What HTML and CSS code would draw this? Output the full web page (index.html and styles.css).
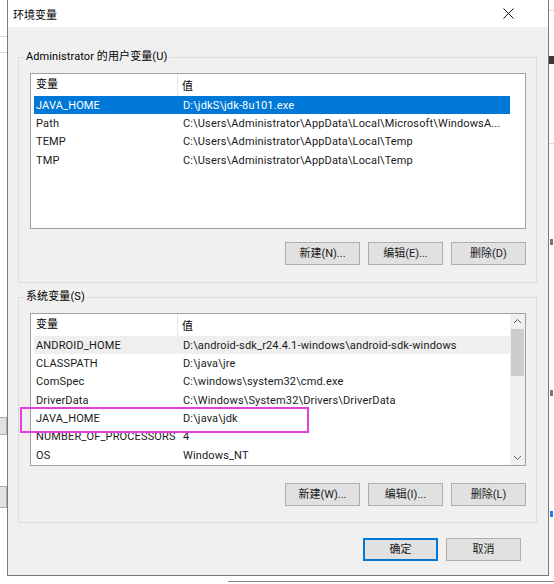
FILE: index.html
```html
<!DOCTYPE html>
<html lang="zh-CN">
<head>
<meta charset="utf-8">
<title>环境变量</title>
<link rel="stylesheet" href="styles.css">
</head>
<body>
<div class="screen">
  <div class="behind behind-left">
    <div class="frag-line fl1"></div>
    <div class="frag-line fl2"></div>
    <div class="frag-btn fb1"></div>
    <div class="frag-btn fb2"></div>
  </div>
  <div class="behind behind-right">
    <div class="frag-dark"></div>
    <div class="frag-line fr1"></div>
    <div class="frag-line fr2"></div>
    <div class="frag-tick ft1"></div>
    <div class="frag-tick ft2"></div>
    <div class="frag-tick ft3"></div>
  </div>
  <div class="behind behind-bottom"></div>

  <div class="dialog">
    <div class="titlebar">
      <span class="title">环境变量</span>
      <svg class="close" width="11" height="11" viewBox="0 0 11 11"><path d="M0.5 0.5 L10.5 10.5 M10.5 0.5 L0.5 10.5" stroke="#111" stroke-width="1" fill="none"/></svg>
    </div>
    <div class="client">
      <div class="group g1">
        <span class="legend">Administrator 的用户变量(U)</span>
        <div class="list l1">
          <div class="lhead">
            <span class="hc1">变量</span><span class="hc2">值</span>
          </div>
          <div class="rows">
            <div class="row sel"><span class="c1">JAVA_HOME</span><span class="c2">D:\jdkS\jdk-8u101.exe</span></div>
            <div class="row"><span class="c1">Path</span><span class="c2">C:\Users\Administrator\AppData\Local\Microsoft\WindowsA...</span></div>
            <div class="row"><span class="c1">TEMP</span><span class="c2">C:\Users\Administrator\AppData\Local\Temp</span></div>
            <div class="row"><span class="c1">TMP</span><span class="c2">C:\Users\Administrator\AppData\Local\Temp</span></div>
          </div>
        </div>
        <div class="btns">
          <button class="btn">新建(N)...</button>
          <button class="btn">编辑(E)...</button>
          <button class="btn">删除(D)</button>
        </div>
      </div>

      <div class="group g2">
        <span class="legend">系统变量(S)</span>
        <div class="list l2">
          <div class="lmain">
            <div class="lhead">
              <span class="hc1">变量</span><span class="hc2">值</span>
            </div>
            <div class="rows">
              <div class="row hover"><span class="c1">ANDROID_HOME</span><span class="c2">D:\android-sdk_r24.4.1-windows\android-sdk-windows</span></div>
              <div class="row"><span class="c1">CLASSPATH</span><span class="c2">D:\java\jre</span></div>
              <div class="row"><span class="c1">ComSpec</span><span class="c2">C:\windows\system32\cmd.exe</span></div>
              <div class="row"><span class="c1">DriverData</span><span class="c2">C:\Windows\System32\Drivers\DriverData</span></div>
              <div class="row"><span class="c1">JAVA_HOME</span><span class="c2">D:\java\jdk</span></div>
              <div class="row"><span class="c1">NUMBER_OF_PROCESSORS</span><span class="c2">4</span></div>
              <div class="row"><span class="c1">OS</span><span class="c2">Windows_NT</span></div>
            </div>
          </div>
          <div class="vscroll">
            <svg class="arrow" width="15" height="15" viewBox="0 0 15 15"><path d="M4 9 L7.5 5.5 L11 9" stroke="#606060" stroke-width="1" fill="none"/></svg>
            <div class="track"><div class="thumb"></div></div>
            <svg class="arrow" width="15" height="15" viewBox="0 0 15 15"><path d="M4 6 L7.5 9.5 L11 6" stroke="#606060" stroke-width="1" fill="none"/></svg>
          </div>
          <div class="mark"></div>
        </div>
        <div class="btns">
          <button class="btn">新建(W)...</button>
          <button class="btn">编辑(I)...</button>
          <button class="btn">删除(L)</button>
        </div>
      </div>

      <div class="footer">
        <button class="btn ok">确定</button>
        <button class="btn">取消</button>
      </div>
    </div>
  </div>
</div>
</body>
</html>
```

FILE: styles.css
```css
* { box-sizing: border-box; }

body {
  margin: 0;
  background: #ffffff;
  font-family: "Microsoft YaHei UI", Roboto, "Noto Sans CJK SC", sans-serif;
  font-size: 11px;
  color: #000;
}

.screen {
  position: relative;
  width: 554px;
  height: 584px;
  overflow: hidden;
  padding-left: 7px;
}

/* fragments of windows behind the dialog */
.behind { position: absolute; overflow: hidden; }
.behind-left { left: 0; top: 0; width: 7px; height: 584px; }
.behind-right { left: 549px; top: 0; width: 5px; height: 584px; }
.behind-bottom { left: 228px; top: 581px; width: 326px; height: 3px; border-top: 1px solid #8a8a8a; }
.frag-line { position: absolute; left: 0; width: 7px; height: 1px; background: #d9d9d9; }
.fl1 { top: 36px; }
.fl2 { top: 52px; }
.fr1 { top: 10px; }
.fr2 { top: 143px; }
.frag-btn {
  position: absolute;
  left: -4px;
  width: 11px;
  background: #e1e1e1;
  border: 1px solid #adadad;
}
.fb1 { top: 417px; height: 18px; }
.fb2 { top: 486px; height: 22px; }
.frag-dark { position: absolute; left: 0; top: 56px; width: 5px; height: 8px; background: #3a3a3a; }
.frag-tick { position: absolute; left: 1px; width: 3px; height: 6px; background: #777; }
.ft1 { top: 239px; }
.ft2 { top: 390px; }
.ft3 { top: 511px; background: #2a7bd4; }

/* dialog */
.dialog {
  width: 542px;
  height: 576px;
  border: 1px solid #7a7a7a;
  border-top: 0;
  background: #f0f0f0;
  display: flex;
  flex-direction: column;
}

.titlebar {
  height: 27px;
  background: #fff;
  display: flex;
  align-items: center;
  justify-content: space-between;
  padding: 0 34px 0 5px;
  flex: none;
}
.title { font-size: 11px; color: #000; }
.close { display: block; }

.client {
  flex: 1;
  padding: 30px 11px 0 10px;
  display: flex;
  flex-direction: column;
}

.group {
  position: relative;
  border: 1px solid #dcdcdc;
  padding: 15px 10px 0 11px;
}
.g1 { height: 226px; }
.g2 { height: 226px; margin-top: 14px; }

.legend {
  position: absolute;
  top: -9px;
  left: 5px;
  padding: 0 2px;
  background: #f0f0f0;
  line-height: 16px;
  letter-spacing: 0.1px;
  color: #000;
}

.list {
  position: relative;
  background: #fff;
  border: 1px solid #a0a0a0;
  display: flex;
}
.l1 { height: 156px; flex-direction: column; }
.l2 { height: 153px; }
.lmain { flex: 1; display: flex; flex-direction: column; }

.lhead {
  height: 22px;
  display: flex;
  align-items: center;
  flex: none;
}
.hc1 {
  width: 147px;
  padding-left: 5px;
  border-right: 1px solid #e5e5e5;
  line-height: 22px;
  height: 22px;
}
.hc2 { padding-left: 4px; }

.rows { display: flex; flex-direction: column; }
.row {
  width: 476px;
  margin-left: 3px;
  height: 18.33px;
  display: flex;
  align-items: center;
  white-space: nowrap;
  letter-spacing: 0.15px;
  color: #1a1a1a;
}
.c1 { width: 146px; padding-left: 2px; flex: none; }
.c2 { padding-left: 3px; }
.row.sel { background: #0078d7; color: #fff; }
.row.hover { background: #efefef; }

.vscroll {
  width: 15px;
  background: #f0f0f0;
  display: flex;
  flex-direction: column;
  flex: none;
}
.arrow { display: block; flex: none; }
.track { flex: 1; }
.thumb { margin: 0 1px; height: 47px; background: #cdcdcd; }

.mark {
  position: absolute;
  left: -11px;
  top: 93px;
  width: 289px;
  height: 26px;
  border: 2px solid #e23ee0;
}

.btns {
  display: flex;
  justify-content: flex-end;
  gap: 8px;
}
.g1 .btns { margin-top: 13px; }
.g2 .btns { margin-top: 17px; }

.btn {
  width: 75px;
  height: 23px;
  background: #e1e1e1;
  border: 1px solid #adadad;
  font-family: "Microsoft YaHei UI", Roboto, "Noto Sans CJK SC", sans-serif;
  font-size: 11px;
  color: #1a1a1a;
  padding: 0;
  line-height: 20px;
}
.btn.ok { border-color: #0078d7; box-shadow: inset 0 0 0 1px #0078d7; }

.footer {
  display: flex;
  justify-content: flex-end;
  gap: 8px;
  margin-top: 15px;
  padding-right: 16px;
}
```
